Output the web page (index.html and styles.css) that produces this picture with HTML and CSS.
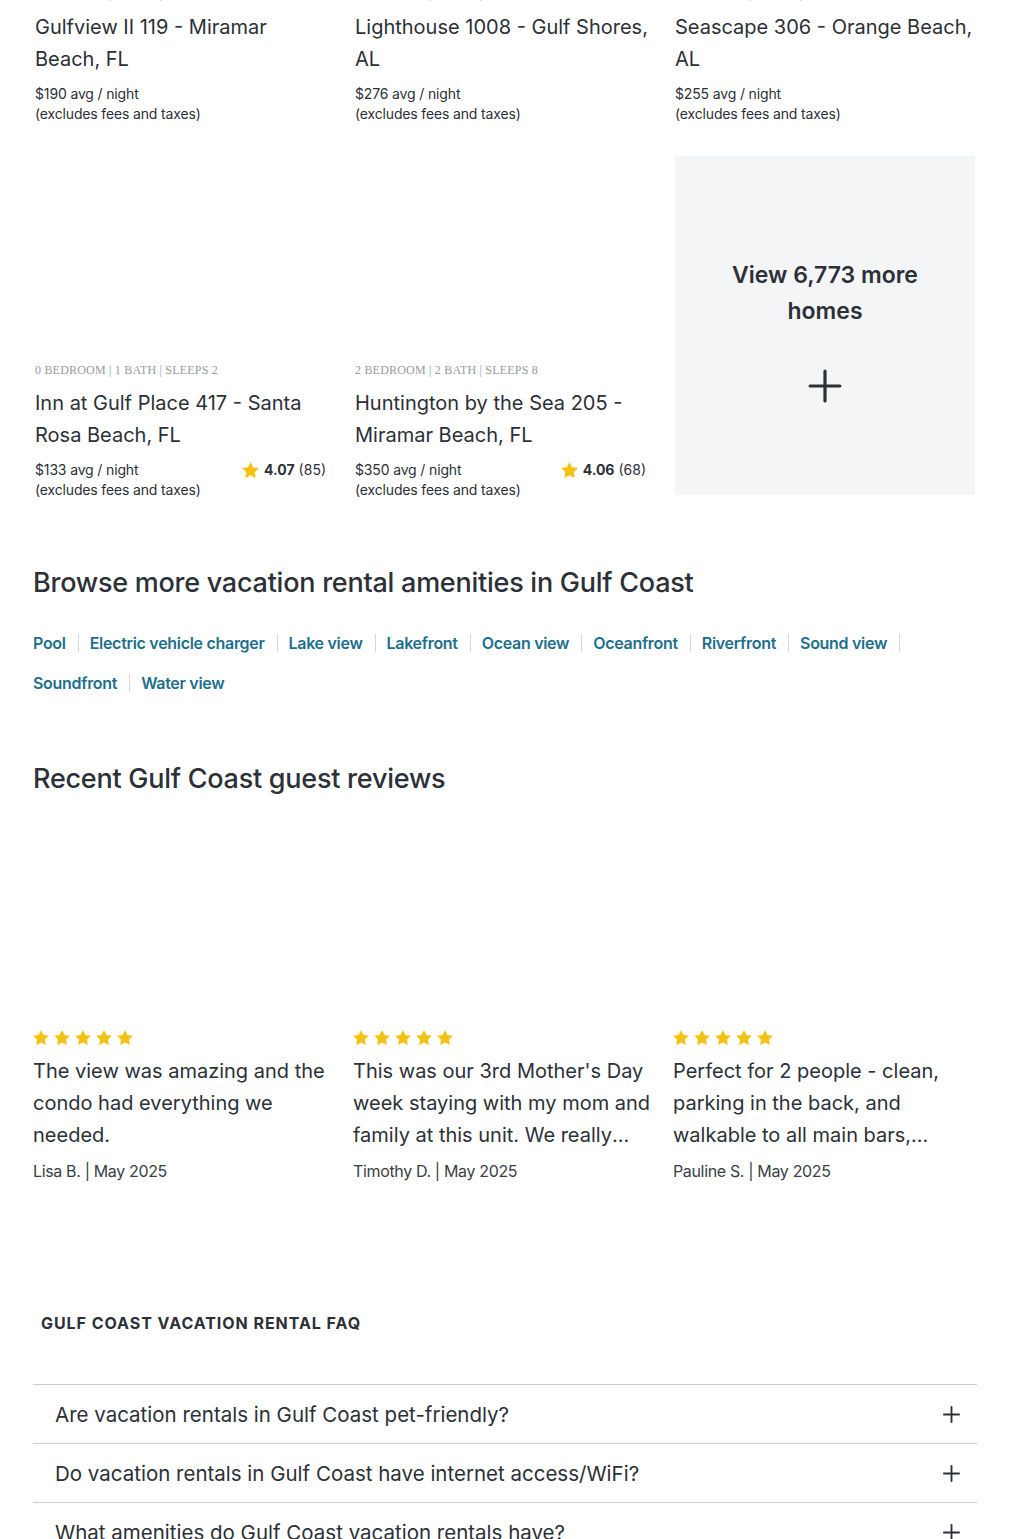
FILE: index.html
```html
<!DOCTYPE html>
<html lang="en">
<head>
<meta charset="utf-8">
<title>Gulf Coast vacation rentals</title>
<link rel="stylesheet" href="styles.css">
</head>
<body>
<main class="page">
  <section class="listings">
    <article class="card">
      <div class="card-img"></div>
      <div class="meta">1 BEDROOM | 2 BATH | SLEEPS 6</div>
      <h3 class="card-title">Gulfview II 119 - Miramar<br>Beach, FL</h3>
      <div class="price-row">
        <div class="price">$190 avg / night<br>(excludes fees and taxes)</div>
      </div>
    </article>
    <article class="card">
      <div class="card-img"></div>
      <div class="meta">2 BEDROOM | 2 BATH | SLEEPS 6</div>
      <h3 class="card-title">Lighthouse 1008 - Gulf Shores,<br>AL</h3>
      <div class="price-row">
        <div class="price">$276 avg / night<br>(excludes fees and taxes)</div>
      </div>
    </article>
    <article class="card">
      <div class="card-img"></div>
      <div class="meta">2 BEDROOM | 2 BATH | SLEEPS 6</div>
      <h3 class="card-title">Seascape 306 - Orange Beach,<br>AL</h3>
      <div class="price-row">
        <div class="price">$255 avg / night<br>(excludes fees and taxes)</div>
      </div>
    </article>
    <article class="card">
      <div class="card-img"></div>
      <div class="meta">0 BEDROOM | 1 BATH | SLEEPS 2</div>
      <h3 class="card-title">Inn at Gulf Place 417 - Santa<br>Rosa Beach, FL</h3>
      <div class="price-row">
        <div class="price">$133 avg / night<br>(excludes fees and taxes)</div>
        <div class="rating">
          <svg class="rstar" viewBox="2 2 20 19.1"><path d="M12 2l3.09 6.26L22 9.27l-5 4.87 1.18 6.88L12 17.77l-6.18 3.25L7 14.14 2 9.27l6.91-1.01L12 2z"/></svg>
          <b>4.07</b> (85)
        </div>
      </div>
    </article>
    <article class="card">
      <div class="card-img"></div>
      <div class="meta">2 BEDROOM | 2 BATH | SLEEPS 8</div>
      <h3 class="card-title">Huntington by the Sea 205 -<br>Miramar Beach, FL</h3>
      <div class="price-row">
        <div class="price">$350 avg / night<br>(excludes fees and taxes)</div>
        <div class="rating">
          <svg class="rstar" viewBox="2 2 20 19.1"><path d="M12 2l3.09 6.26L22 9.27l-5 4.87 1.18 6.88L12 17.77l-6.18 3.25L7 14.14 2 9.27l6.91-1.01L12 2z"/></svg>
          <b>4.06</b> (68)
        </div>
      </div>
    </article>
    <a class="card more">
      <span class="more-text">View 6,773 more homes</span>
      <svg class="more-plus" viewBox="0 0 32 32"><path d="M16 2v28M2 16h28"/></svg>
    </a>
  </section>

  <section class="amenities">
    <h2 class="section-title">Browse more vacation rental amenities in Gulf Coast</h2>
    <ul class="links">
      <li><a>Pool</a></li>
      <li><a>Electric vehicle charger</a></li>
      <li><a>Lake view</a></li>
      <li><a>Lakefront</a></li>
      <li><a>Ocean view</a></li>
      <li><a>Oceanfront</a></li>
      <li><a>Riverfront</a></li>
      <li><a>Sound view</a></li>
      <li><a>Soundfront</a></li>
      <li><a>Water view</a></li>
    </ul>
  </section>

  <section class="reviews">
    <h2 class="section-title">Recent Gulf Coast guest reviews</h2>
    <div class="review-grid">
      <article class="review">
        <div class="review-img"></div>
        <div class="stars">
          <svg viewBox="2 2 20 19.1"><path d="M12 2l3.09 6.26L22 9.27l-5 4.87 1.18 6.88L12 17.77l-6.18 3.25L7 14.14 2 9.27l6.91-1.01L12 2z"/></svg>
          <svg viewBox="2 2 20 19.1"><path d="M12 2l3.09 6.26L22 9.27l-5 4.87 1.18 6.88L12 17.77l-6.18 3.25L7 14.14 2 9.27l6.91-1.01L12 2z"/></svg>
          <svg viewBox="2 2 20 19.1"><path d="M12 2l3.09 6.26L22 9.27l-5 4.87 1.18 6.88L12 17.77l-6.18 3.25L7 14.14 2 9.27l6.91-1.01L12 2z"/></svg>
          <svg viewBox="2 2 20 19.1"><path d="M12 2l3.09 6.26L22 9.27l-5 4.87 1.18 6.88L12 17.77l-6.18 3.25L7 14.14 2 9.27l6.91-1.01L12 2z"/></svg>
          <svg viewBox="2 2 20 19.1"><path d="M12 2l3.09 6.26L22 9.27l-5 4.87 1.18 6.88L12 17.77l-6.18 3.25L7 14.14 2 9.27l6.91-1.01L12 2z"/></svg>
        </div>
        <p class="review-text">The view was amazing and the condo had everything we needed.</p>
        <div class="author">Lisa B. | May 2025</div>
      </article>
      <article class="review">
        <div class="review-img"></div>
        <div class="stars">
          <svg viewBox="2 2 20 19.1"><path d="M12 2l3.09 6.26L22 9.27l-5 4.87 1.18 6.88L12 17.77l-6.18 3.25L7 14.14 2 9.27l6.91-1.01L12 2z"/></svg>
          <svg viewBox="2 2 20 19.1"><path d="M12 2l3.09 6.26L22 9.27l-5 4.87 1.18 6.88L12 17.77l-6.18 3.25L7 14.14 2 9.27l6.91-1.01L12 2z"/></svg>
          <svg viewBox="2 2 20 19.1"><path d="M12 2l3.09 6.26L22 9.27l-5 4.87 1.18 6.88L12 17.77l-6.18 3.25L7 14.14 2 9.27l6.91-1.01L12 2z"/></svg>
          <svg viewBox="2 2 20 19.1"><path d="M12 2l3.09 6.26L22 9.27l-5 4.87 1.18 6.88L12 17.77l-6.18 3.25L7 14.14 2 9.27l6.91-1.01L12 2z"/></svg>
          <svg viewBox="2 2 20 19.1"><path d="M12 2l3.09 6.26L22 9.27l-5 4.87 1.18 6.88L12 17.77l-6.18 3.25L7 14.14 2 9.27l6.91-1.01L12 2z"/></svg>
        </div>
        <p class="review-text">This was our 3rd Mother's Day week staying with my mom and family at this unit. We really enjoyed our stay and will be back again next year.</p>
        <div class="author">Timothy D. | May 2025</div>
      </article>
      <article class="review">
        <div class="review-img"></div>
        <div class="stars">
          <svg viewBox="2 2 20 19.1"><path d="M12 2l3.09 6.26L22 9.27l-5 4.87 1.18 6.88L12 17.77l-6.18 3.25L7 14.14 2 9.27l6.91-1.01L12 2z"/></svg>
          <svg viewBox="2 2 20 19.1"><path d="M12 2l3.09 6.26L22 9.27l-5 4.87 1.18 6.88L12 17.77l-6.18 3.25L7 14.14 2 9.27l6.91-1.01L12 2z"/></svg>
          <svg viewBox="2 2 20 19.1"><path d="M12 2l3.09 6.26L22 9.27l-5 4.87 1.18 6.88L12 17.77l-6.18 3.25L7 14.14 2 9.27l6.91-1.01L12 2z"/></svg>
          <svg viewBox="2 2 20 19.1"><path d="M12 2l3.09 6.26L22 9.27l-5 4.87 1.18 6.88L12 17.77l-6.18 3.25L7 14.14 2 9.27l6.91-1.01L12 2z"/></svg>
          <svg viewBox="2 2 20 19.1"><path d="M12 2l3.09 6.26L22 9.27l-5 4.87 1.18 6.88L12 17.77l-6.18 3.25L7 14.14 2 9.27l6.91-1.01L12 2z"/></svg>
        </div>
        <p class="review-text">Perfect for 2 people - clean, parking in the back, and walkable to all main bars, restaurants and the beach.</p>
        <div class="author">Pauline S. | May 2025</div>
      </article>
    </div>
  </section>

  <section class="faq">
    <h2 class="faq-title">GULF COAST VACATION RENTAL FAQ</h2>
    <ul class="faq-list">
      <li class="faq-item"><span>Are vacation rentals in Gulf Coast pet-friendly?</span><svg class="faq-plus" viewBox="0 0 18 18"><path d="M9 1v16M1 9h16"/></svg></li>
      <li class="faq-item"><span>Do vacation rentals in Gulf Coast have internet access/WiFi?</span><svg class="faq-plus" viewBox="0 0 18 18"><path d="M9 1v16M1 9h16"/></svg></li>
      <li class="faq-item"><span>What amenities do Gulf Coast vacation rentals have?</span><svg class="faq-plus" viewBox="0 0 18 18"><path d="M9 1v16M1 9h16"/></svg></li>
    </ul>
  </section>
</main>
</body>
</html>
```

FILE: styles.css
```css
* { box-sizing: border-box; }
html, body { margin: 0; padding: 0; }
body {
  font-family: "Inter", "Liberation Sans", sans-serif;
  color: #2c3037;
  background: #fff;
  overflow: hidden;
}
.page {
  width: 944px;
  margin: 0 0 0 33px;
}
.listings {
  margin-top: -220px;
  display: grid;
  grid-template-columns: repeat(3, 304px);
  column-gap: 16px;
  row-gap: 32px;
}
.card {
  display: block;
  padding: 0 2px;
}
.card-img { height: 200px; }
.meta {
  margin-top: 6px;
  font-family: "Liberation Serif", "DejaVu Serif", serif;
  font-size: 12px;
  line-height: 16px;
  color: #979a9e;
  letter-spacing: 0.2px;
}
.card-title {
  margin: 9px 0 0;
  font-size: 20px;
  font-weight: 400;
  line-height: 32px;
  letter-spacing: 0;
  white-space: nowrap;
}
.price-row {
  margin-top: 9px;
  display: flex;
  justify-content: space-between;
  align-items: flex-start;
  padding-right: 9px;
}
.price {
  font-size: 14px;
  line-height: 20px;
  letter-spacing: -0.15px;
}
.rating {
  display: flex;
  align-items: center;
  font-size: 14px;
  line-height: 20px;
}
.rating b { font-weight: 700; margin-right: 4px; }
.rstar {
  width: 17px;
  height: 16px;
  fill: #f7c20f;
  margin-right: 5px;
}
.more {
  margin: 0 2px;
  padding: 0;
  background: #f4f5f7;
  display: flex;
  flex-direction: column;
  align-items: center;
  justify-content: center;
  height: 339px;
}
.more-text {
  width: 200px;
  text-align: center;
  font-size: 23px;
  font-weight: 600;
  line-height: 36px;
  margin-top: 8px;
}
.more-plus {
  width: 34px;
  height: 34px;
  margin-top: 40px;
  stroke: #2c3037;
  stroke-width: 3;
  stroke-linecap: round;
  fill: none;
}
.section-title {
  margin: 0;
  font-size: 27px;
  font-weight: 500;
  line-height: 36px;
  letter-spacing: -0.25px;
}
.amenities { margin-top: 65px; }
.links {
  list-style: none;
  margin: 30px 0 0;
  padding: 0;
  display: flex;
  flex-wrap: wrap;
  row-gap: 16px;
}
.links li {
  display: flex;
  align-items: center;
  font-size: 16px;
  line-height: 24px;
  font-weight: 600;
  color: #1d6f8c;
  letter-spacing: -0.3px;
}
.links li::after {
  content: "";
  width: 1px;
  height: 18px;
  background: #d5d7da;
  margin: 0 11px 0 12px;
}
.links li:last-child::after { display: none; }
.reviews { margin-top: 66px; }
.review-grid {
  margin-top: 24px;
  display: grid;
  grid-template-columns: repeat(3, 304px);
  column-gap: 16px;
}
.review-img { height: 209px; }
.stars {
  display: flex;
  gap: 5px;
}
.stars svg {
  width: 16px;
  height: 15px;
  fill: #f7c20f;
}
.review-text {
  margin: 10px 0 0;
  font-size: 20px;
  line-height: 32px;
  letter-spacing: 0;
  display: -webkit-box;
  -webkit-line-clamp: 3;
  -webkit-box-orient: vertical;
  overflow: hidden;
}
.author {
  margin-top: 8px;
  font-size: 16px;
  line-height: 24px;
  color: #3a3e45;
  letter-spacing: -0.35px;
}
.faq { margin-top: 128px; }
.faq-title {
  margin: 0;
  padding-left: 8px;
  font-size: 16px;
  line-height: 24px;
  font-weight: 700;
  letter-spacing: 0.95px;
}
.faq-list {
  list-style: none;
  margin: 49px 0 0;
  padding: 0;
  border-top: 1px solid #c9cbce;
}
.faq-item {
  height: 59px;
  border-bottom: 1px solid #c9cbce;
  display: flex;
  align-items: center;
  justify-content: space-between;
  padding: 0 17px 0 22px;
  font-size: 20.5px;
  letter-spacing: 0;
}
.faq-plus {
  width: 17px;
  height: 17px;
  stroke: #2c3037;
  stroke-width: 2;
  stroke-linecap: round;
  fill: none;
}
```
